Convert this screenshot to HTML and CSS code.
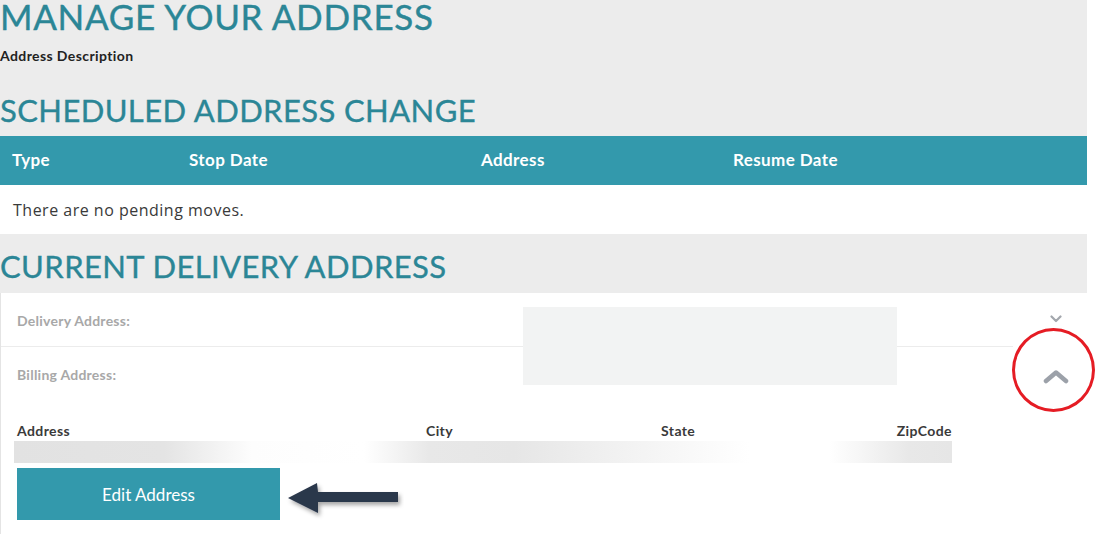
FILE: index.html
```html
<!DOCTYPE html>
<html lang="en">
<head>
<meta charset="utf-8">
<title>Manage Your Address</title>
<link rel="stylesheet" href="styles.css">
</head>
<body>
<div class="page">
  <h1 class="title-main">MANAGE YOUR ADDRESS</h1>
  <div class="desc">Address Description</div>

  <h2 class="section-title first">SCHEDULED ADDRESS CHANGE</h2>
  <div class="moves">
    <div class="moves-head">
      <div>Type</div>
      <div>Stop Date</div>
      <div>Address</div>
      <div>Resume Date</div>
    </div>
    <div class="moves-empty">There are no pending moves.</div>
  </div>

  <h2 class="section-title second">CURRENT DELIVERY ADDRESS</h2>
  <div class="card">
    <div class="addr-row">
      <div class="addr-label-cell divided"><span class="addr-label">Delivery Address:</span></div>
      <div class="addr-toggle">
        <svg class="chev-down" width="12" height="8" viewBox="0 0 12 8"><polyline points="1.5,1.5 6,6 10.5,1.5" fill="none" stroke="#a3a7ad" stroke-width="2.2" stroke-linecap="round" stroke-linejoin="round"/></svg>
      </div>
    </div>
    <div class="addr-row">
      <div class="addr-label-cell"><span class="addr-label">Billing Address:</span></div>
      <div class="addr-toggle">
        <svg class="chev-up" width="26" height="15" viewBox="0 0 26 15"><polyline points="3,12 13,3.5 23,12" fill="none" stroke="#9ca1a9" stroke-width="4.5" stroke-linecap="round" stroke-linejoin="round"/></svg>
      </div>
    </div>
    <div class="redact-box"></div>
    <div class="ring"></div>

    <div class="addr-grid">
      <div>Address</div>
      <div>City</div>
      <div>State</div>
      <div class="zip">ZipCode</div>
    </div>
    <div class="redact-bar"></div>

    <div class="actions">
      <button class="edit-btn" type="button">Edit Address</button>
      <svg class="pointer" width="120" height="44" viewBox="0 0 120 44">
        <defs>
          <filter id="sh" x="-10%" y="-30%" width="130%" height="180%">
            <feDropShadow dx="2" dy="3" stdDeviation="2" flood-color="#000" flood-opacity="0.35"/>
          </filter>
        </defs>
        <polygon points="4,21 33,6 34,15 114,15 114,25 34,25 34,36" fill="#2b374b" filter="url(#sh)"/>
      </svg>
    </div>
  </div>
</div>
</body>
</html>
```

FILE: styles.css
```css
html, body {
  margin: 0;
  padding: 0;
  background: #ffffff;
}

body {
  font-family: "Lato", "Open Sans", sans-serif;
  color: #333;
}

.page {
  width: 1087px;
  background: #ececec;
}

.title-main {
  margin: 0;
  font-size: 35px;
  line-height: 32px;
  font-weight: 400;
  color: #2b8696;
  letter-spacing: 0.7px;
  -webkit-text-stroke: 0.4px #2b8696;
}

.desc {
  margin-top: 16px;
  font-size: 14px;
  line-height: 16px;
  font-weight: 700;
  color: #222;
  letter-spacing: 0.4px;
}

.section-title {
  margin: 0;
  font-size: 31px;
  line-height: 30px;
  font-weight: 400;
  color: #2b8696;
  letter-spacing: 0.4px;
  -webkit-text-stroke: 0.35px #2b8696;
}

.section-title.first {
  margin: 31px 0 11px;
}

.section-title.second {
  margin: 17px 0 12px;
}

.moves-head {
  display: grid;
  grid-template-columns: 177px 292px 252px 1fr;
  align-items: center;
  height: 49px;
  padding-left: 12px;
  background: #3399ac;
  color: #fff;
  font-size: 17px;
  line-height: 20px;
  font-weight: 700;
  letter-spacing: 0.4px;
}

.moves-head > div {
  margin-top: -2px;
}

.moves-empty {
  display: flex;
  align-items: center;
  height: 49px;
  padding-left: 13px;
  background: #fff;
  font-family: "Open Sans", sans-serif;
  font-size: 16px;
  letter-spacing: 0.5px;
  color: #3a3a3a;
}

.card {
  position: relative;
  background: #fff;
  border-left: 1px solid #e4e4e4;
  padding-bottom: 20px;
}

.addr-row {
  display: flex;
}

.addr-label-cell {
  flex: 1;
  padding: 17px 0 0 16px;
  height: 16px;
}

.addr-label-cell.divided {
  height: 36px;
  border-bottom: 1px solid #ececec;
}

.addr-label {
  font-size: 14px;
  line-height: 16px;
  font-weight: 700;
  color: #a8a8a8;
  letter-spacing: 0.25px;
}

.addr-toggle {
  width: 74px;
  display: flex;
  justify-content: center;
  align-items: flex-start;
  padding-left: 12px;
  box-sizing: border-box;
}

.chev-down {
  margin-top: 22px;
}

.chev-up {
  margin-top: 22px;
  margin-bottom: -6px;
  filter: blur(0.7px);
}

.redact-box {
  position: absolute;
  left: 522px;
  top: 14px;
  width: 374px;
  height: 78px;
  background: #f2f3f3;
}

.ring {
  position: absolute;
  left: 1011px;
  top: 35px;
  width: 83px;
  height: 84px;
  box-sizing: border-box;
  border: 3px solid #e51c24;
  border-radius: 50%;
}

.addr-grid {
  display: grid;
  grid-template-columns: 409px 235px 1fr auto;
  width: 935px;
  margin: 43px 0 0 16px;
  font-size: 14px;
  line-height: 16px;
  font-weight: 700;
  color: #3a3a3a;
  letter-spacing: 0.4px;
}

.redact-bar {
  margin: 2px 0 0 13px;
  width: 938px;
  height: 22px;
  background: linear-gradient(to right,
    #e2e2e2 0px, #e4e4e4 150px, #fdfdfd 238px, #ffffff 350px,
    #e8e8e8 415px, #e6e6e6 500px, #f3f3f3 620px, #ffffff 735px,
    #ffffff 815px, #e8e8e8 895px, #e6e6e6 938px);
}

.actions {
  display: flex;
  align-items: flex-start;
  margin: 5px 0 0 16px;
}

.edit-btn {
  width: 263px;
  height: 52px;
  border: 0;
  background: #3399ac;
  color: #fff;
  font-family: "Lato", sans-serif;
  font-size: 17px;
  font-weight: 400;
  cursor: pointer;
}

.pointer {
  margin: 9px 0 0 4px;
}
```
